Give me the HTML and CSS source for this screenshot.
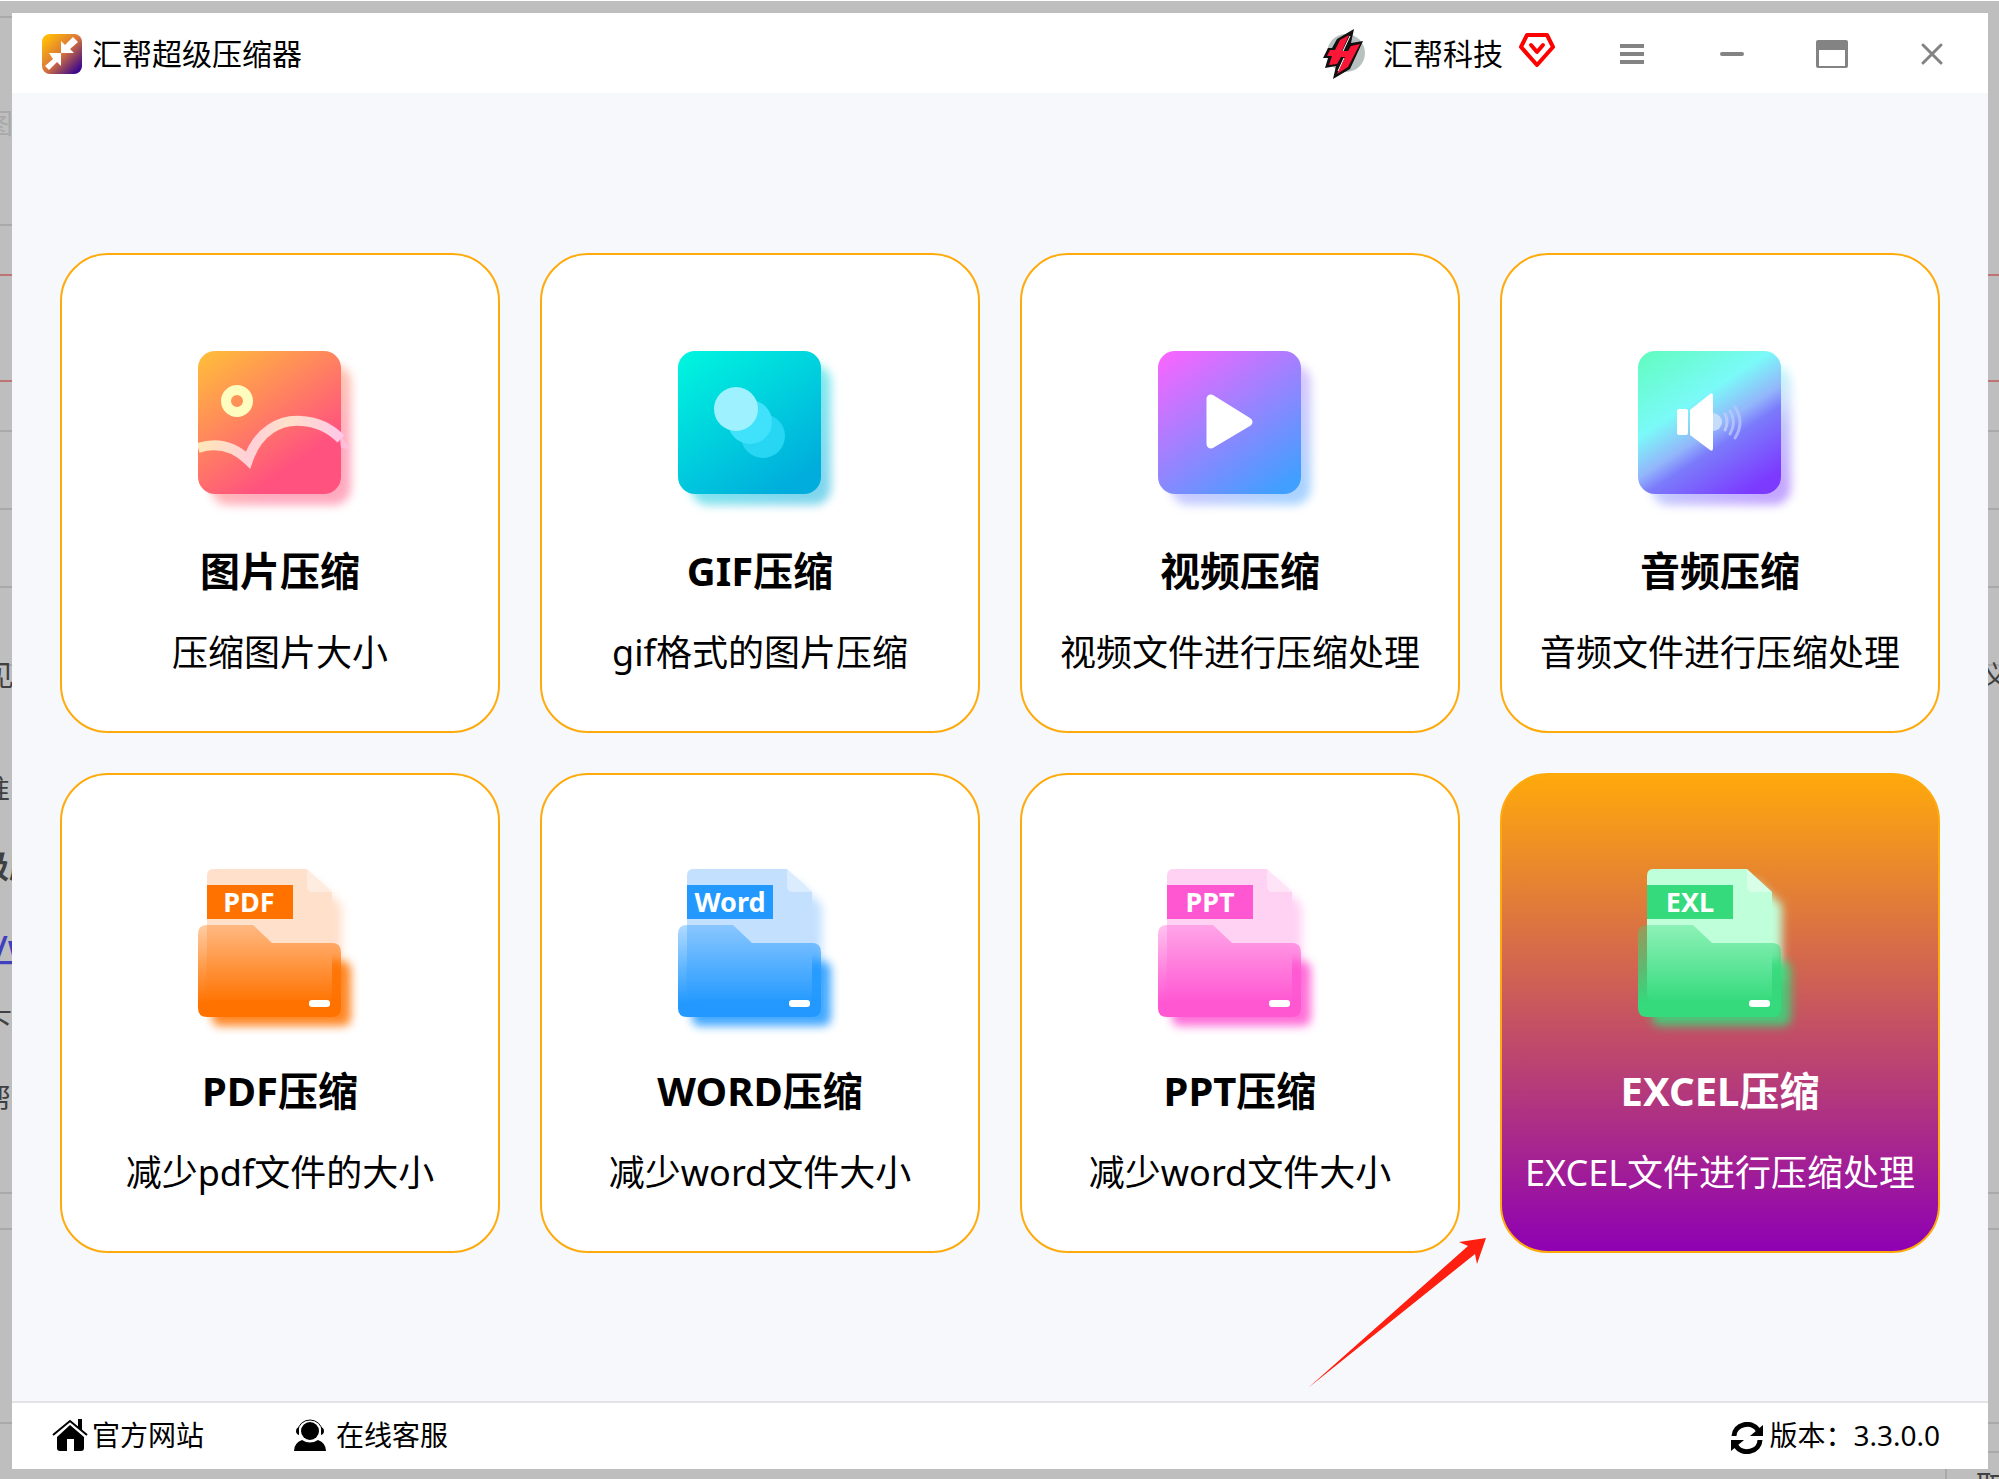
FILE: index.html
```html
<!DOCTYPE html>
<html lang="zh-CN">
<head>
<meta charset="utf-8">
<title>汇帮超级压缩器</title>
<link rel="stylesheet" href="styles.css">
</head>
<body>
<svg class="defs" aria-hidden="true">
  <defs>
    <filter id="soft" x="-20%" y="-20%" width="140%" height="140%"><feGaussianBlur stdDeviation="5"/></filter>
    <linearGradient id="g-image" x1="0" y1="0" x2="0.7" y2="1"><stop offset="0" stop-color="#ffc038"/><stop offset=".85" stop-color="#ff527f"/></linearGradient>
    <linearGradient id="g-hill" gradientUnits="userSpaceOnUse" x1="0" y1="80" x2="143" y2="110"><stop offset="0" stop-color="#ffe9b4"/><stop offset=".4" stop-color="#ffd0d8"/><stop offset=".6" stop-color="#ffe0c8"/><stop offset="1" stop-color="#ffc6ea"/></linearGradient>
    <linearGradient id="g-gif" x1="0" y1="0" x2="0.7" y2="1"><stop offset="0" stop-color="#00f7df"/><stop offset="1" stop-color="#00addc"/></linearGradient>
    <linearGradient id="g-video" x1="0.1" y1="0" x2="0.8" y2="1"><stop offset="0" stop-color="#f566ff"/><stop offset="1" stop-color="#419fff"/></linearGradient>
    <linearGradient id="g-audio" x1="0.1" y1="0" x2="0.75" y2="1"><stop offset="0" stop-color="#63fcc4"/><stop offset=".38" stop-color="#7afaf8"/><stop offset=".58" stop-color="#93b6fb"/><stop offset=".68" stop-color="#7b7bfb"/><stop offset="1" stop-color="#7c3aff"/></linearGradient>
    <linearGradient id="g-fade" x1="0" y1="0" x2="0" y2="1"><stop offset="0" stop-color="#fff" stop-opacity=".36"/><stop offset=".85" stop-color="#fff"/></linearGradient>
    <linearGradient id="g-logo" x1="0" y1="0" x2="1" y2="1"><stop offset=".1" stop-color="#ffba08"/><stop offset=".5" stop-color="#d9743c"/><stop offset=".9" stop-color="#3d0a8c"/></linearGradient>
    <mask id="m-fade" maskUnits="userSpaceOnUse" x="0" y="60" width="144" height="100"><rect y="64" width="144" height="92" fill="url(#g-fade)"/></mask>
    <symbol id="folder" viewBox="0 0 164 176">
      <path class="page" d="M24 20H118L144 44V120H24Z" filter="url(#soft)"/>
      <path d="M14 100H144Q153 100 153 110V156Q153 165 144 165H22Q14 165 14 156Z" fill="currentColor" opacity=".85" filter="url(#soft)"/>
      <path class="page" d="M15 8H109L134 31V133Q134 139 128 139H15Q9 139 9 133V15Q9 8 15 8Z"/>
      <path d="M109 8L134 31H115Q109 31 109 25Z" fill="#fff" opacity=".4"/>
      <path d="M9 64H55L74 82H134Q143 82 143 91V147Q143 156 134 156H9Q0 156 0 147V73Q0 64 9 64Z" fill="currentColor" mask="url(#m-fade)"/>
      <rect x="9" y="24" width="86" height="34" fill="currentColor"/>
      <rect x="111" y="139" width="21" height="7" rx="3" fill="#fff"/>
    </symbol>
  </defs>
</svg>

<div class="backdrop" aria-hidden="true">
  <svg width="100%" height="100%">
    <g stroke="#a9a9a9" stroke-width="2">
      <path d="M0 16H13M0 224H13M0 1422H13"/>
      <path d="M0 430H1999M0 508H1999M0 586H1999M0 664H1999M0 1192H1999M0 1228H1999M1980 1422H1999M1980 1451H1999M1946 1460V1479"/>
    </g>
    <path d="M0 274H1999M0 380H1999" stroke="#bd7474" stroke-width="2"/>
    <g class="doc">
      <text x="-15" y="133" fill="#a9a9a9">图</text>
      <text x="-14" y="685">见</text>
      <text x="-18" y="799">准</text>
      <text x="-23" y="877" font-size="32" font-weight="700">级压</text>
      <text class="doc-link" x="-5" y="958" font-size="32" font-weight="600">/w</text>
      <text x="-16" y="1032">下</text>
      <text x="-17" y="1108">帮</text>
      <text x="1981" y="685">义</text>
      <text x="1976" y="1495">取</text>
    </g>
  </svg>
</div>

<div class="window">
  <header class="titlebar">
    <div class="brand">
      <svg width="40" height="40" viewBox="0 0 40 40" aria-hidden="true">
        <rect width="40" height="40" rx="8" fill="url(#g-logo)"/>
        <path d="M19 19V7L23 11L31 3L36 8L28 15L32 19Z" fill="#fff"/>
        <path d="M19 19V32L15 28L7 36L3 32L11 25L7 19Z" fill="#fff"/>
      </svg>
      <h1>汇帮超级压缩器</h1>
    </div>
    <div class="account">
      <svg width="44" height="52" viewBox="0 0 44 52" aria-hidden="true">
        <circle cx="23" cy="25" r="19" fill="#b7c2c0"/>
        <path d="M31 1L14 11L9 20H5L0 30H5L2 40L13 38L10 51L27 41L40 13L28 15Z" fill="#111"/>
        <path d="M26 7L17 12L12 22H7L4 28H9L6 37L14 36L18 29H22L14 46L25 39L37 16L28 18L25 23H19Z" fill="#fb1537"/>
        <path d="M27 8L20 23M21 30L15 43" stroke="#fff" stroke-width="1"/>
      </svg>
      <span>汇帮科技</span>
      <svg class="vip" width="36" height="36" viewBox="0 0 36 36" aria-hidden="true">
        <path d="M8 2H28L34 14L18 32L2 14Z" fill="none" stroke="#f00" stroke-width="4" stroke-linejoin="round"/>
        <path d="M12 12L18 19L24 12" fill="none" stroke="#f00" stroke-width="4" stroke-linecap="round" stroke-linejoin="round"/>
      </svg>
    </div>
    <div class="controls">
      <button type="button" aria-label="菜单"><svg width="26" height="26" viewBox="0 0 26 26"><path d="M1 5H25M1 13H25M1 21H25" stroke="#838383" stroke-width="4"/></svg></button>
      <button type="button" aria-label="最小化"><svg width="26" height="26" viewBox="0 0 26 26"><path d="M3 13H23" stroke="#838383" stroke-width="4" stroke-linecap="round"/></svg></button>
      <button type="button" aria-label="最大化"><svg width="32" height="28" viewBox="0 0 32 28"><path d="M2 0H30Q32 0 32 2V26Q32 28 30 28H2Q0 28 0 26V2Q0 0 2 0ZM3 10V26H29V10Z" fill="#838383"/></svg></button>
      <button type="button" aria-label="关闭"><svg width="26" height="26" viewBox="0 0 26 26"><path d="M4 4L22 22M22 4L4 22" stroke="#838383" stroke-width="3" stroke-linecap="round"/></svg></button>
    </div>
  </header>

  <main class="content">
    <div class="grid">
      <button type="button" class="card">
        <svg class="icon" viewBox="0 0 164 176" aria-hidden="true">
          <rect x="13" y="24" width="140" height="140" rx="17" fill="url(#g-image)" opacity=".5" filter="url(#soft)"/>
          <rect y="10" width="143" height="143" rx="17" fill="url(#g-image)"/>
          <circle cx="39" cy="60" r="11" fill="none" stroke="#fffcc0" stroke-width="10"/>
          <path d="M0 107Q28 98 50 119C60 90 82 78 104 80C120 81 132 87 143 98" fill="none" stroke="url(#g-hill)" stroke-width="10" stroke-linejoin="miter"/>
          <path d="M140 91L152 108L143 107Z" fill="#ffc6ea" opacity=".6"/>
        </svg>
        <span class="name">图片压缩</span>
        <span class="note">压缩图片大小</span>
      </button>
      <button type="button" class="card">
        <svg class="icon" viewBox="0 0 164 176" aria-hidden="true">
          <rect x="13" y="24" width="140" height="140" rx="17" fill="url(#g-gif)" opacity=".5" filter="url(#soft)"/>
          <rect y="10" width="143" height="143" rx="17" fill="url(#g-gif)"/>
          <circle cx="85" cy="95" r="22" fill="#26d6f3"/>
          <circle cx="72" cy="81" r="22" fill="#3fe1fb"/>
          <circle cx="58" cy="68" r="22" fill="#9ef1ff"/>
        </svg>
        <span class="name">GIF压缩</span>
        <span class="note">gif格式的图片压缩</span>
      </button>
      <button type="button" class="card">
        <svg class="icon" viewBox="0 0 164 176" aria-hidden="true">
          <rect x="13" y="24" width="140" height="140" rx="17" fill="url(#g-video)" opacity=".45" filter="url(#soft)"/>
          <rect y="10" width="143" height="143" rx="17" fill="url(#g-video)"/>
          <path d="M53 58V103L90 81Z" fill="#fff" stroke="#fff" stroke-width="9" stroke-linejoin="round"/>
        </svg>
        <span class="name">视频压缩</span>
        <span class="note">视频文件进行压缩处理</span>
      </button>
      <button type="button" class="card">
        <svg class="icon" viewBox="0 0 164 176" aria-hidden="true">
          <rect x="13" y="24" width="140" height="140" rx="17" fill="url(#g-audio)" opacity=".45" filter="url(#soft)"/>
          <rect y="10" width="143" height="143" rx="17" fill="url(#g-audio)"/>
          <path d="M75 72A9 9 0 0 1 75 90Z" fill="#c6dcfb"/>
          <g fill="none" stroke="#b9c8fc" stroke-width="3" stroke-linecap="round">
            <path d="M87 73Q91 81 87 89"/><path d="M92 70Q99 81 92 93" opacity=".8"/><path d="M97 66Q107 81 97 97" opacity=".75"/>
          </g>
          <rect x="39" y="68" width="11" height="26" rx="2" fill="#fff"/>
          <path d="M52 69L72 53Q75 51 75 55V107Q75 111 72 109L52 94Z" fill="#fff"/>
        </svg>
        <span class="name">音频压缩</span>
        <span class="note">音频文件进行压缩处理</span>
      </button>
      <button type="button" class="card">
        <svg class="icon pdf" viewBox="0 0 164 176" aria-hidden="true">
          <use href="#folder"/>
          <text x="51" y="51">PDF</text>
        </svg>
        <span class="name">PDF压缩</span>
        <span class="note">减少pdf文件的大小</span>
      </button>
      <button type="button" class="card">
        <svg class="icon word" viewBox="0 0 164 176" aria-hidden="true">
          <use href="#folder"/>
          <text x="52" y="51">Word</text>
        </svg>
        <span class="name">WORD压缩</span>
        <span class="note">减少word文件大小</span>
      </button>
      <button type="button" class="card">
        <svg class="icon ppt" viewBox="0 0 164 176" aria-hidden="true">
          <use href="#folder"/>
          <text x="52" y="51">PPT</text>
        </svg>
        <span class="name">PPT压缩</span>
        <span class="note">减少word文件大小</span>
      </button>
      <div class="pointed">
        <button type="button" class="card active">
          <svg class="icon exl" viewBox="0 0 164 176" aria-hidden="true">
            <use href="#folder"/>
            <text x="52" y="51">EXL</text>
          </svg>
          <span class="name">EXCEL压缩</span>
          <span class="note">EXCEL文件进行压缩处理</span>
        </button>
        <svg class="arrow" width="178" height="150" viewBox="0 0 178 150" aria-hidden="true">
          <path d="M178 0L151 4L160 8L0 150L167 16L169 26Z" fill="#ff1f10"/>
        </svg>
      </div>
    </div>
  </main>

  <footer class="footer">
    <a href="#site" class="site">
      <svg width="36" height="32" viewBox="0 0 36 32" aria-hidden="true">
        <path d="M1 16L18 2L35 16" fill="none" stroke="#000" stroke-width="2"/>
        <path d="M26 0H30V12L26 8Z"/>
        <path d="M18 6L32 18V29Q32 32 29 32H22V20H15V32H8Q5 32 5 29V18Z"/>
      </svg>
      官方网站
    </a>
    <a href="#support" class="support">
      <svg width="32" height="32" viewBox="0 0 32 32" aria-hidden="true">
        <circle cx="16" cy="12" r="9"/>
        <path d="M4 12A12 11 0 0 1 28 12" fill="none" stroke="#000" stroke-width="1"/>
        <path d="M5 8V16Q2 15 2 12T5 8ZM27 8V16Q30 15 30 12T27 8Z"/>
        <path d="M0 32Q0 24 8 21Q16 26 24 21Q32 24 32 32Z"/>
      </svg>
      在线客服
    </a>
    <div class="version">
      <svg width="32" height="32" viewBox="0 0 32 32" aria-hidden="true">
        <path d="M3 14A13 12 0 0 1 27 8" fill="none" stroke="#000" stroke-width="5"/>
        <path d="M32 3V14H19Z"/>
        <path d="M29 18A13 12 0 0 1 5 24" fill="none" stroke="#000" stroke-width="5"/>
        <path d="M0 29V18H13Z"/>
      </svg>
      <span>版本：3.3.0.0</span>
    </div>
  </footer>
</div>
</body>
</html>
```

FILE: styles.css
```css
* { box-sizing: border-box; }

body {
  margin: 0;
  background: #bebebe;
  color: #000;
  font-family: "Noto Sans", "Noto Sans CJK SC", sans-serif;
}

button {
  border: 0;
  background: none;
  color: inherit;
  font: inherit;
  padding: 0;
  cursor: pointer;
}

svg { display: block; flex: none; }

.defs { position: absolute; width: 0; height: 0; }

.backdrop {
  position: absolute;
  inset: 0;
  overflow: hidden;
  border-top: 1px solid #fff;
}

.doc { font-size: 28px; fill: #404040; }
.doc-link { fill: #3f3fbf; text-decoration: underline; }

.window {
  position: relative;
  display: flex;
  flex-direction: column;
  min-height: calc(100vh - 23px);
  margin: 13px 11px 10px 12px;
  background: #f6f8fc;
}

.titlebar {
  display: flex;
  align-items: center;
  height: 80px;
  padding: 2px 6px 0 30px;
  background: #fff;
  font-size: 30px;
  line-height: 40px;
}

.brand { display: flex; align-items: center; gap: 10px; flex: 1; }
.brand h1 { margin: 0; font-size: 30px; font-weight: 400; }

.account { display: flex; align-items: center; gap: 16px; padding-right: 27px; }
.vip { margin-bottom: 6px; }

.controls { display: flex; }
.controls button { display: grid; place-items: center; width: 100px; height: 78px; }

.content { flex: 1; padding: 160px 48px 148px; }

.grid { display: grid; grid-template-columns: repeat(4, 1fr); gap: 40px; }

.card {
  display: flex;
  flex-direction: column;
  align-items: center;
  width: 100%;
  min-height: 480px;
  padding-top: 86px;
  border: 2px solid #ffaa0b;
  border-radius: 48px;
  background: #fff;
  white-space: nowrap;
}

.active {
  background: linear-gradient(#ffaa0b, #8e00b4) border-box;
  color: #fff;
}

.icon { width: 164px; height: 176px; }
.icon text { font-size: 27px; font-weight: 700; fill: #fff; text-anchor: middle; }
.page { fill: var(--page); }
.pdf { color: #ff7200; --page: #ffe0cb; }
.word { color: #2399ff; --page: #c3e0ff; }
.ppt { color: #ff56d2; --page: #ffd2f3; }
.exl { color: #34da7c; --page: #bfffd9; }

.name { margin-top: 26px; font-size: 40px; font-weight: 700; line-height: 56px; }
.note { margin-top: 30px; font-size: 36px; line-height: 48px; }

.pointed { position: relative; }
.arrow { position: absolute; top: 465px; right: 100%; margin-right: 14px; }

.footer {
  display: flex;
  align-items: center;
  height: 68px;
  padding: 0 48px 2px 40px;
  border-top: 2px solid #e3e3e5;
  background: #fff;
  font-size: 28px;
  line-height: 40px;
}

.footer a { display: flex; align-items: center; color: inherit; text-decoration: none; }
.site { gap: 4px; margin-right: 90px; }
.support { gap: 10px; }
.version { display: flex; align-items: center; gap: 6px; margin-left: auto; }
.version svg { margin-top: 6px; }
```
